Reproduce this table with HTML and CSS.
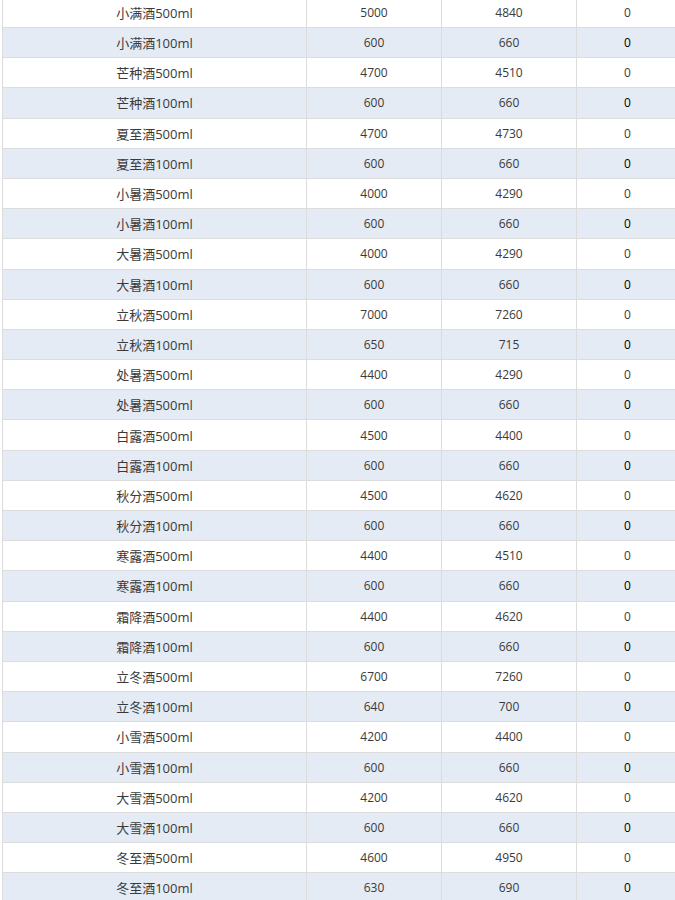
FILE: index.html
```html
<!DOCTYPE html>
<html lang="zh-CN">
<head>
<meta charset="utf-8">
<title>价格表</title>
<link rel="stylesheet" href="styles.css">
</head>
<body>
<div class="wrap">
<table class="price">
<colgroup><col class="c1"><col class="c2"><col class="c3"><col class="c4"></colgroup>
<tbody>
<tr><td>小满酒500ml</td><td>5000</td><td>4840</td><td>0</td></tr>
<tr><td>小满酒100ml</td><td>600</td><td>660</td><td>0</td></tr>
<tr><td>芒种酒500ml</td><td>4700</td><td>4510</td><td>0</td></tr>
<tr><td>芒种酒100ml</td><td>600</td><td>660</td><td>0</td></tr>
<tr><td>夏至酒500ml</td><td>4700</td><td>4730</td><td>0</td></tr>
<tr><td>夏至酒100ml</td><td>600</td><td>660</td><td>0</td></tr>
<tr><td>小暑酒500ml</td><td>4000</td><td>4290</td><td>0</td></tr>
<tr><td>小暑酒100ml</td><td>600</td><td>660</td><td>0</td></tr>
<tr><td>大暑酒500ml</td><td>4000</td><td>4290</td><td>0</td></tr>
<tr><td>大暑酒100ml</td><td>600</td><td>660</td><td>0</td></tr>
<tr><td>立秋酒500ml</td><td>7000</td><td>7260</td><td>0</td></tr>
<tr><td>立秋酒100ml</td><td>650</td><td>715</td><td>0</td></tr>
<tr><td>处暑酒500ml</td><td>4400</td><td>4290</td><td>0</td></tr>
<tr><td>处暑酒500ml</td><td>600</td><td>660</td><td>0</td></tr>
<tr><td>白露酒500ml</td><td>4500</td><td>4400</td><td>0</td></tr>
<tr><td>白露酒100ml</td><td>600</td><td>660</td><td>0</td></tr>
<tr><td>秋分酒500ml</td><td>4500</td><td>4620</td><td>0</td></tr>
<tr><td>秋分酒100ml</td><td>600</td><td>660</td><td>0</td></tr>
<tr><td>寒露酒500ml</td><td>4400</td><td>4510</td><td>0</td></tr>
<tr><td>寒露酒100ml</td><td>600</td><td>660</td><td>0</td></tr>
<tr><td>霜降酒500ml</td><td>4400</td><td>4620</td><td>0</td></tr>
<tr><td>霜降酒100ml</td><td>600</td><td>660</td><td>0</td></tr>
<tr><td>立冬酒500ml</td><td>6700</td><td>7260</td><td>0</td></tr>
<tr><td>立冬酒100ml</td><td>640</td><td>700</td><td>0</td></tr>
<tr><td>小雪酒500ml</td><td>4200</td><td>4400</td><td>0</td></tr>
<tr><td>小雪酒100ml</td><td>600</td><td>660</td><td>0</td></tr>
<tr><td>大雪酒500ml</td><td>4200</td><td>4620</td><td>0</td></tr>
<tr><td>大雪酒100ml</td><td>600</td><td>660</td><td>0</td></tr>
<tr><td>冬至酒500ml</td><td>4600</td><td>4950</td><td>0</td></tr>
<tr><td>冬至酒100ml</td><td>630</td><td>690</td><td>0</td></tr>
</tbody>
</table>
</div>
</body>
</html>
```
FILE: styles.css
```css
html, body {
  margin: 0;
  padding: 0;
  background: #fff;
  overflow: hidden;
}
.wrap {
  padding-left: 2px;
  margin-top: -2.2px;
}
.price {
  border-collapse: separate;
  border-spacing: 0;
  table-layout: fixed;
  width: 677px;
  border-left: 1px solid #dcdcdc;
  font-family: "Open Sans", "Noto Sans CJK SC", sans-serif;
  color: #3a3a3a;
}
.c1 { width: 304px; }
.c2 { width: 135px; }
.c3 { width: 135px; }
.c4 { width: 102px; }
.price td {
  box-sizing: border-box;
  height: 30.2px;
  padding: 1px 0 0;
  text-align: center;
  vertical-align: middle;
  border-right: 1px solid #dcdcdc;
  border-bottom: 1px solid #dcdcdc;
  font-size: 12px;
  line-height: 16px;
}
.price td:first-child {
  font-size: 13px;
}
.price tr:nth-child(even) td {
  background: #e5ebf5;
}
.price tr:nth-child(even) td:last-child {
  color: #000;
}
```
